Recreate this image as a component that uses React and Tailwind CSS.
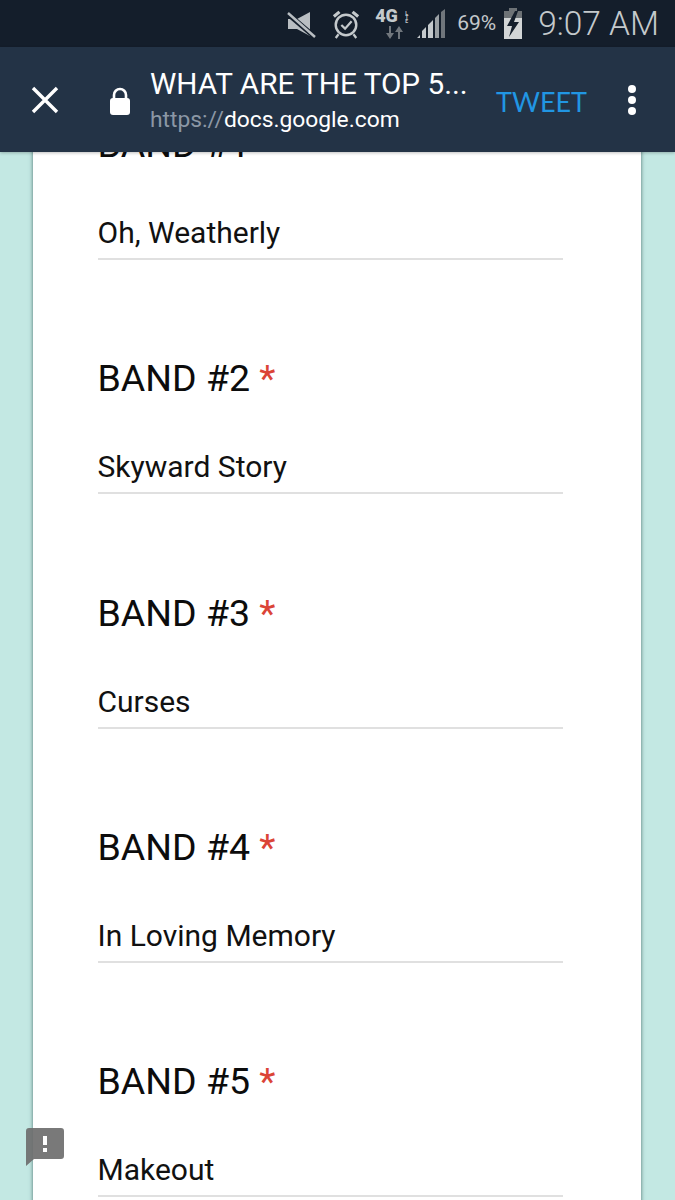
const font = { fontFamily: "Roboto, 'Noto Sans', sans-serif" };

function Field({ n, value, first }) {
  return (
    <div className={first ? "" : "mt-[99.25px]"}>
      <div className="h-10 pb-[2px] flex items-center text-[37.5px] leading-[38px] text-[#0c0c0c] whitespace-nowrap -ml-[0.5px]">
        BAND #{n}
        <span className="ml-[9px] text-[#db4437]">*</span>
      </div>
      <div className="mt-[50px] h-[45px] pb-[8px] flex items-center text-[30px] leading-[37px] text-[#111111] whitespace-nowrap border-b-2 border-[#e0e0e0] w-[465px]">
        <span className="-ml-[0.5px]">{value}</span>
      </div>
    </div>
  );
}

function StatusBar() {
  return (
    <div className="h-[47px] bg-[#141e2b] flex items-center justify-end pr-[16px] text-[#c4c9cc] shrink-0">
      <svg width="30" height="30" viewBox="0 0 30 30" className="mr-[15px]" fill="none">
        <path d="M1 9h9l13-7v24l-13-7H1z" fill="#b9bec2" transform="translate(0 1)" />
        <path d="M1 5l28 24" stroke="#141e2b" strokeWidth="5" />
        <path d="M1 4l27 24" stroke="#b9bec2" strokeWidth="2.5" />
      </svg>
      <svg width="28" height="32" viewBox="0 0 30 32" className="mr-[15px]" fill="none" stroke="#c4c9cc">
        <circle cx="15" cy="17" r="11" strokeWidth="2.6" />
        <path d="M10 17l4 4 7-8" strokeWidth="2.4" />
        <path d="M2 8l6-5M28 8l-6-5" strokeWidth="3.4" />
        <path d="M7 27l-3 4M23 27l3 4" strokeWidth="2.4" />
      </svg>
      <div className="relative w-[36px] h-[38px] mr-[5px] shrink-0">
        <span className="absolute left-0 top-[2px] text-[18px] leading-[18px] font-black text-[#c4c9cc]">4G</span>
        <span className="absolute left-[30px] top-[6px] text-[5px] leading-[4px] font-bold text-[#c4c9cc] w-[5px]">L<br />T<br />E</span>
        <svg width="22" height="14" viewBox="0 0 22 14" className="absolute left-[9px] top-[21px]">
          <path d="M6 13V6h3L5 0 1 6h3v7z" fill="#70767c" transform="rotate(180 5.5 6.5)" />
          <path d="M14 13V6h-3l4-6 4 6h-3v7z" fill="#70767c" />
        </svg>
      </div>
      <svg width="30" height="30" viewBox="0 0 30 30" className="mr-[11px]">
        <path d="M1 29l3-3v3zM6 29v-7l4-4v11zM12 29V16l5-5v18z" fill="#c4c9cc" />
        <path d="M19 29V9l4-4v24z" fill="#9aa0a4" />
        <path d="M25 29V3l4-3v29z" fill="#70767c" />
      </svg>
      <span className="text-[21px] leading-none mr-[6px]">69%</span>
      <svg width="22" height="32" viewBox="0 0 22 32" className="mr-[14px]">
        <path d="M7 0h8v3h5v7H2V3h5z" fill="#6d7276" />
        <path d="M2 10h18v21H2z" fill="#d2d5d6" />
        <path d="M13 3L5 18h5l-3 11 10-15h-5l4-11z" fill="#141e2b" />
      </svg>
      <span className="text-[33.5px] leading-none font-light">9:07 AM</span>
    </div>
  );
}

function Header() {
  return (
    <div className="relative z-10 h-[105px] bg-[#233346] shadow-[0_1px_3px_rgba(0,0,0,0.25)] flex items-center shrink-0">
      <svg width="30" height="30" viewBox="0 0 30 30" className="ml-[30px] shrink-0" stroke="#ffffff" strokeWidth="3.4" fill="none">
        <path d="M3 3l24 24M27 3L3 27" />
      </svg>
      <svg width="22" height="28" viewBox="0 0 22 28" className="ml-[49px] mt-[2px] shrink-0">
        <path d="M5 12V8a6 6 0 0112 0v4" fill="none" stroke="#ffffff" strokeWidth="2.6" />
        <rect x="1" y="11" width="20" height="17" rx="3" fill="#ffffff" />
      </svg>
      <div className="ml-[19px] mt-[3px] w-[331px] shrink-0">
        <div className="text-[29.7px] leading-[38px] text-white whitespace-nowrap">WHAT ARE THE TOP 5...</div>
        <div className="text-[22.8px] leading-[34px] text-white whitespace-nowrap">
          <span className="text-[#8b97a5]">https://</span>docs.google.com
        </div>
      </div>
      <span className="ml-[15px] mt-[4px] text-[#2196e3] text-[27px] leading-none shrink-0" style={{ fontFamily: "Lato, sans-serif" }}>TWEET</span>
      <div className="ml-[41px] flex flex-col gap-[3px] shrink-0">
        <span className="block w-2 h-2 rounded-full bg-white"></span>
        <span className="block w-2 h-2 rounded-full bg-white"></span>
        <span className="block w-2 h-2 rounded-full bg-white"></span>
      </div>
    </div>
  );
}

export default function App() {
  return (
    <div className="w-[675px] h-[1200px] overflow-hidden flex flex-col bg-[#c3e8e3]" style={font}>
      <StatusBar />
      <Header />
      <div className="relative flex-1 overflow-hidden">
        <div className="ml-[33px] w-[608px] bg-white shadow-[0_0_4px_rgba(60,100,95,0.9)] pl-[65px] h-[1200px] -mt-[27px]">
          <Field first n={1} value="Oh, Weatherly" />
          <Field n={2} value="Skyward Story" />
          <Field n={3} value="Curses" />
          <Field n={4} value="In Loving Memory" />
          <Field n={5} value="Makeout" />
        </div>
        <svg width="38" height="38" viewBox="0 0 38 38" className="absolute left-[26px] top-[976px]">
          <path d="M3 0h32a3 3 0 013 3v25a3 3 0 01-3 3H8l-8 7V3a3 3 0 013-3z" fill="#6e6e6e" fillOpacity="0.92" />
          <rect x="17" y="8" width="4" height="9" fill="#ffffff" />
          <rect x="17" y="20" width="4" height="4" fill="#ffffff" />
        </svg>
      </div>
    </div>
  );
}
